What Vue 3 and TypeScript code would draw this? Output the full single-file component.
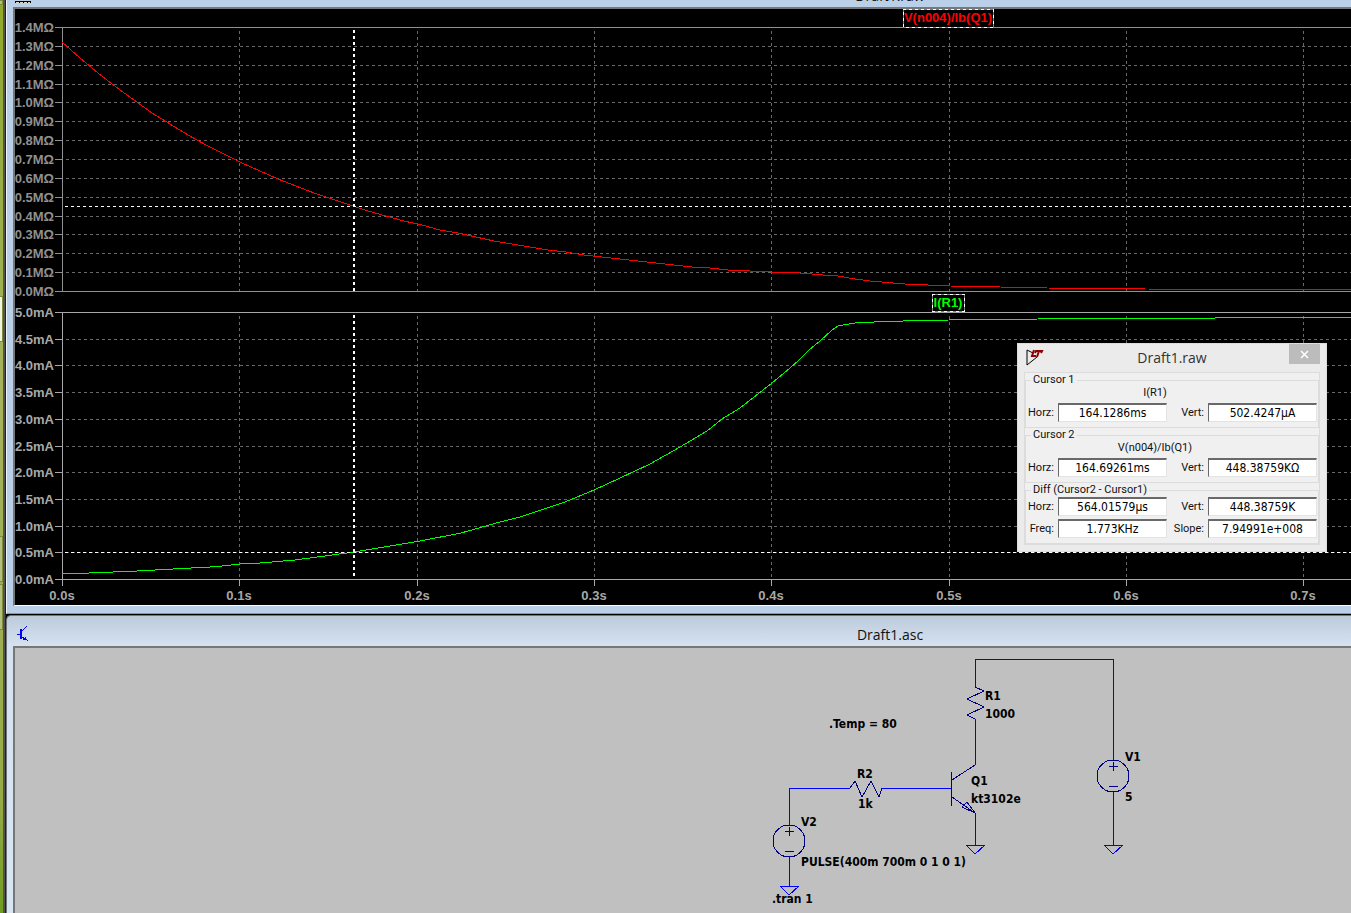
<script setup lang="ts">
interface Tick { label: string; y: number }
interface Note { text: string; x: number; y: number }
interface Field { id: string; label: string; value: string }
interface Group { title: string; trace?: string; rows: Field[][] }

const AXIS_X = 47
const UPPER = { top: 18, bottom: 282 }
const LOWER = { top: 303, bottom: 570 }

const upperTicks: Tick[] = Array.from({ length: 15 }, (_, i) => ({
  label: `${((14 - i) / 10).toFixed(1)}MΩ`,
  y: Math.round(UPPER.top + (i * (UPPER.bottom - UPPER.top)) / 14),
}))
const lowerTicks: Tick[] = Array.from({ length: 11 }, (_, i) => ({
  label: `${((10 - i) / 2).toFixed(1)}mA`,
  y: Math.round(LOWER.top + (i * (LOWER.bottom - LOWER.top)) / 10),
}))
const timeTicks = Array.from({ length: 8 }, (_, i) => ({
  label: `${(i / 10).toFixed(1)}s`,
  x: Math.round(AXIS_X + i * 177.3),
}))

const decay = Array.from({ length: 38 }, (_, i) => {
  const dx = i * 18
  return `${AXIS_X + dx},${Math.round(UPPER.bottom - 249 * Math.exp(-0.0037 * dx))}`
}).join(' ')
const redTrace = `${decay} 756,263 785,264 808,266 823,267 840,270 855,272 890,275 935,277 985,278 1032,279 1130,280 1400,281 1800,281`
const greenTrace =
  '47,564 74,564 98,563 122,562 140,561 158,560 176,559 195,558 207,557 225,555 245,554 257,553 280,551 310,547 339,543 405,532 446,524 485,513 505,508 526,501 550,493 579,481 605,469 635,455 665,438 692,422 707,410 725,399 757,374 775,359 783,352 794,341 805,332 817,321 823,317 834,315 840,314 859,313 888,312 934,311 1023,310 1200,309 1800,308'

const notes: Note[] = [
  { text: 'R1', x: 970, y: 52 },
  { text: '1000', x: 970, y: 70 },
  { text: '.Temp = 80', x: 814, y: 80 },
  { text: 'V1', x: 1110, y: 113 },
  { text: '5', x: 1110, y: 153 },
  { text: 'R2', x: 842, y: 130 },
  { text: '1k', x: 843, y: 160 },
  { text: 'Q1', x: 956, y: 137 },
  { text: 'kt3102e', x: 956, y: 155 },
  { text: 'V2', x: 786, y: 178 },
  { text: 'PULSE(400m 700m 0 1 0 1)', x: 786, y: 218 },
  { text: '.tran 1', x: 757, y: 255 },
]

const groups: Group[] = [
  {
    title: 'Cursor 1',
    trace: 'I(R1)',
    rows: [[
      { id: 'c1h', label: 'Horz:', value: '164.1286ms' },
      { id: 'c1v', label: 'Vert:', value: '502.4247µA' },
    ]],
  },
  {
    title: 'Cursor 2',
    trace: 'V(n004)/Ib(Q1)',
    rows: [[
      { id: 'c2h', label: 'Horz:', value: '164.69261ms' },
      { id: 'c2v', label: 'Vert:', value: '448.38759KΩ' },
    ]],
  },
  {
    title: 'Diff (Cursor2 - Cursor1)',
    rows: [
      [
        { id: 'dh', label: 'Horz:', value: '564.01579µs' },
        { id: 'dv', label: 'Vert:', value: '448.38759K' },
      ],
      [
        { id: 'df', label: 'Freq:', value: '1.773KHz' },
        { id: 'ds', label: 'Slope:', value: '7.94991e+008' },
      ],
    ],
  },
]
</script>

<template>
  <div class="desktop">
    <aside class="edge" aria-hidden="true">
      <i class="tile t1"></i><i class="tile t2"></i><i class="tile t3"></i><i class="tile t4"></i>
    </aside>
    <main class="workspace">
      <section class="window plot-window">
        <header class="titlebar clipped">
          <svg class="plot-icon" width="16" height="3" shape-rendering="crispEdges">
            <path d="M0 1H16V3H0Z" fill="#000" />
            <path d="M1 2H4V3H1ZM5 2H8V3H5ZM9 2H12V3H9ZM13 2H15V3H13Z" fill="#d8d8c8" />
          </svg>
          <h1>Draft1.raw</h1>
        </header>
        <div class="client">
          <svg class="chart" width="100%" height="596" shape-rendering="crispEdges">
            <g class="grid">
              <line v-for="t in upperTicks.slice(1, -1)" :key="'u' + t.label" :x1="AXIS_X + 4" :y1="t.y" x2="100%" :y2="t.y" />
              <line v-for="t in lowerTicks.slice(1, -1)" :key="'l' + t.label" :x1="AXIS_X + 4" :y1="t.y" x2="100%" :y2="t.y" />
              <template v-for="t in timeTicks.slice(1)" :key="t.label">
                <line :x1="t.x" :y1="UPPER.top + 4" :x2="t.x" :y2="UPPER.bottom" />
                <line :x1="t.x" :y1="LOWER.top + 4" :x2="t.x" :y2="LOWER.bottom" />
              </template>
            </g>
            <g class="axis upper">
              <line x1="40" :y1="UPPER.top" x2="100%" :y2="UPPER.top" />
              <line x1="40" :y1="UPPER.bottom" x2="100%" :y2="UPPER.bottom" />
              <line :x1="AXIS_X" :y1="UPPER.top" :x2="AXIS_X" :y2="UPPER.bottom" />
              <template v-for="t in upperTicks" :key="t.label">
                <line x1="40" :y1="t.y" :x2="AXIS_X" :y2="t.y" />
                <text x="39" :y="t.y + 5" text-anchor="end">{{ t.label }}</text>
              </template>
            </g>
            <g class="axis lower">
              <line x1="40" :y1="LOWER.top" x2="100%" :y2="LOWER.top" />
              <line x1="40" :y1="LOWER.bottom" x2="100%" :y2="LOWER.bottom" />
              <line :x1="AXIS_X" :y1="LOWER.top" :x2="AXIS_X" :y2="LOWER.bottom" />
              <template v-for="t in lowerTicks" :key="t.label">
                <line x1="40" :y1="t.y" :x2="AXIS_X" :y2="t.y" />
                <text x="39" :y="t.y + 5" text-anchor="end">{{ t.label }}</text>
              </template>
              <template v-for="t in timeTicks" :key="t.label">
                <line :x1="t.x" :y1="LOWER.bottom" :x2="t.x" :y2="LOWER.bottom + 7" />
                <text :x="t.x" :y="LOWER.bottom + 21" text-anchor="middle">{{ t.label }}</text>
              </template>
            </g>
            <polyline class="trace red" :points="redTrace" />
            <polyline class="trace green" :points="greenTrace" />
            <g class="cursor">
              <line x1="50" y1="197" x2="100%" y2="197" />
              <line x1="50" y1="543" x2="100%" y2="543" />
              <line class="thick" x1="339" y1="21" x2="339" :y2="UPPER.bottom" />
              <line class="thick" x1="339" y1="306" x2="339" :y2="LOWER.bottom" />
            </g>
            <g class="legend">
              <rect x="888" y="0" width="90" height="18" /><rect class="dash" x="888" y="0" width="90" height="18" />
              <text class="red-text" x="933" y="13" text-anchor="middle">V(n004)/Ib(Q1)</text>
              <rect x="917" y="285" width="32" height="17" /><rect class="dash" x="917" y="285" width="32" height="17" />
              <text class="green-text" x="933" y="298" text-anchor="middle">I(R1)</text>
            </g>
          </svg>
        </div>
      </section>

      <section class="window schematic-window">
        <header class="titlebar">
          <svg class="bjt-icon" width="14" height="18" shape-rendering="crispEdges">
            <path d="M1 9H5" stroke="#00f" stroke-width="1" />
            <path d="M5 4V14" stroke="#00f" stroke-width="2" />
            <path d="M5 7L11 1M5 11L10 15" stroke="#00f" stroke-width="1" fill="none" />
            <path d="M9 11V14H6L8 15H12V17Z" fill="#00f" />
          </svg>
          <h2>Draft1.asc</h2>
        </header>
        <div class="client">
          <svg class="schematic" width="100%" height="100%">
            <g class="wires" shape-rendering="crispEdges">
              <path d="M960 39V11H1098V112M960 71V117M960 165V197M1098 144V197" />
              <path d="M774 177V140H835M867 140H936M774 209V238" />
              <path d="M951 197H970L960 206ZM1089 197H1108L1098 206ZM765 238H784L774 247Z" />
            </g>
            <g class="parts" shape-rendering="crispEdges">
              <path d="M960 39L969 43L952 51L969 59L952 67L960 71" />
              <path d="M835 140L840 133L847 149L856 133L864 149L867 140" />
              <path d="M936 124V158M937 132L960 117M937 149L960 165M947 159L952 154L960 165Z" />
              <circle cx="1098" cy="128" r="16" />
              <path d="M1094 118H1103M1098 114V123M1094 138H1103" />
              <circle cx="774" cy="193" r="16" />
              <path d="M770 183H779M774 179V188M770 203H779" />
            </g>
            <text v-for="n in notes" :key="n.text" :x="n.x" :y="n.y">{{ n.text }}</text>
          </svg>
        </div>
      </section>

      <form class="dialog" aria-label="Draft1.raw" @submit.prevent>
        <header class="dialog-title">
          <svg class="lt-icon" width="18" height="18">
            <path d="M7 4L1 1V16L11 8" fill="none" stroke="#000" stroke-width="1" />
            <path d="M8 1L6 7H10" fill="none" stroke="#8b0000" stroke-width="2" />
            <path d="M9 4L10 2H16L15 4M13 2L11 8" fill="none" stroke="#8b0000" stroke-width="2" />
          </svg>
          <span>Draft1.raw</span>
          <button type="button" aria-label="Close">
            <svg width="9" height="9"><path d="M1 1L8 8M8 1L1 8" stroke="#fff" stroke-width="1.5" /></svg>
          </button>
        </header>
        <div class="panel">
          <fieldset v-for="g in groups" :key="g.title">
            <legend>{{ g.title }}</legend>
            <p v-if="g.trace">{{ g.trace }}</p>
            <div class="rows">
              <div v-for="(row, i) in g.rows" :key="i" class="row">
                <template v-for="f in row" :key="f.id">
                  <label :for="f.id">{{ f.label }}</label>
                  <input :id="f.id" type="text" :value="f.value" />
                </template>
              </div>
            </div>
          </fieldset>
        </div>
      </form>
    </main>
  </div>
</template>

<style>
body { overflow: hidden; }
</style>

<style scoped>
* { box-sizing: border-box; }
.desktop {
  display: flex;
  height: 100vh;
  overflow: hidden;
  background: #000;
  font-family: "Liberation Sans", Arial, sans-serif;
}
.edge {
  position: relative;
  flex: none;
  width: 5px;
  background: linear-gradient(#93a928 0, #93ab3c 100px, #a6b45e 400px, #96ab46 800px, #6f9c23 100%);
  border-right: 2px solid #55534f;
}
.tile {
  position: absolute;
  left: 0;
  width: 3px;
  border: 1px solid #7c8b3c;
  border-left: 0;
  background: #b5c07e;
}
.t1 { top: 0; height: 5px; }
.t2 { top: 296px; height: 46px; background: #f0f3dd; }
.t3 { top: 536px; height: 46px; }
.t4 { top: 584px; height: 46px; }
.workspace {
  position: relative;
  flex: none;
  display: flex;
  flex-direction: column;
  width: calc(100vw + 419px);
  border-left: 1px solid #222;
}
.window { display: flex; flex-direction: column; }
.plot-window {
  flex: none;
  padding: 0 8px 7px 6px;
  border-left: 1px solid #eef4fb;
  border-bottom: 1px solid #25bfd0;
  background: #b9d0e8;
}
.schematic-window {
  flex: 1;
  min-height: 0;
  margin-top: 1px;
  padding: 0 8px 0 6px;
  border-top: 1px solid #70757c;
  border-left: 1px solid #70757c;
  border-top-left-radius: 5px;
  background: linear-gradient(#bccbdb 0, #d5e2f0 30px, #d8e5f3 100%);
}
.titlebar {
  position: relative;
  display: flex;
  flex: none;
  align-items: center;
  justify-content: center;
  height: 30px;
  padding-top: 7px;
}
.titlebar.clipped { height: 7px; padding: 0; align-items: flex-end; overflow: hidden; }
h1, h2 {
  margin: 0;
  font: 400 14px/20px "Open Sans", "Noto Sans", sans-serif;
  color: #111;
}
.clipped h1 { margin-bottom: 1px; }
.plot-icon { position: absolute; left: 2px; top: 0; }
.bjt-icon { position: absolute; left: 3px; top: 9px; }
.client {
  flex: 1;
  min-height: 0;
  border: 2px solid #6a6a6a;
  border-top-color: #777;
  border-left-color: #777;
  border-bottom: 0;
}
.plot-window .client { border-bottom: 1px solid #fff; }
.schematic-window .client { background: #c0c0c0; }
.chart, .schematic { display: block; }
.chart { background: #000; }
.chart text { font: 700 13px "Liberation Sans", Arial, sans-serif; }
.chart line { stroke-width: 1; }
.grid line { stroke: #696969; stroke-dasharray: 3 3; }
.upper line { stroke: #909090; }
.upper text { fill: #909090; }
.lower line { stroke: #a8a8a8; }
.lower text { fill: #a8a8a8; }
.trace { fill: none; stroke-width: 1; }
.red { stroke: #f00; }
.green { stroke: #0f0; }
.cursor line { stroke: #fff; stroke-dasharray: 3 3; }
.cursor .thick { stroke-width: 2; }
.legend rect { fill: #000; stroke: #808080; stroke-width: 1; }
.legend .dash { fill: none; stroke: #fff; stroke-dasharray: 3 3; }
.legend .red-text { fill: #f00; }
.legend .green-text { fill: #0f0; }
.wires { fill: none; stroke: #00f; stroke-width: 1; }
.parts { fill: none; stroke: #000080; stroke-width: 1; }
.schematic text { font: 700 12px "DejaVu Sans Condensed", "DejaVu Sans", Tahoma, sans-serif; fill: #000; }

.dialog {
  position: absolute;
  left: 1011px;
  top: 343px;
  width: 310px;
  padding: 0 6px 6px;
  border: 1px solid #dcdcdc;
  background: #ebebeb;
}
.dialog-title {
  position: relative;
  display: flex;
  align-items: center;
  justify-content: center;
  height: 28px;
  font: 400 14px/20px "Open Sans", "Noto Sans", sans-serif;
  color: #333;
}
.lt-icon { position: absolute; left: 2px; top: 5px; }
.dialog-title button {
  position: absolute;
  right: 0;
  top: 0;
  width: 31px;
  height: 20px;
  padding: 0;
  border: 0;
  background: #bcbcbc;
  line-height: 0;
}
.panel {
  border: 1px solid #dcdcdc;
  background: #f0f0f0;
  font: 400 11px/12px Roboto, "Liberation Sans", sans-serif;
  color: #111;
}
fieldset { min-width: 0; margin: 0; padding: 0 0 5px; border: 1px solid #dcdcdc; }
legend { margin-left: 5px; padding: 0 2px; line-height: 14px; }
p { margin: 0 0 4px; padding-right: 34px; text-align: center; }
.rows { display: grid; gap: 3px; }
.row {
  display: grid;
  grid-template-columns: 28px 109px 33px 109px;
  column-gap: 4px;
  align-items: center;
}
label { text-align: right; white-space: nowrap; }
input {
  width: 100%;
  height: 19px;
  padding: 0;
  border: 1px solid #e3e3e3;
  border-top: 2px solid #696969;
  border-left: 1px solid #696969;
  border-radius: 0;
  background: #fff;
  font: 400 12px/16px "DejaVu Sans Condensed", "DejaVu Sans", Tahoma, sans-serif;
  text-align: center;
  color: #000;
}
</style>
